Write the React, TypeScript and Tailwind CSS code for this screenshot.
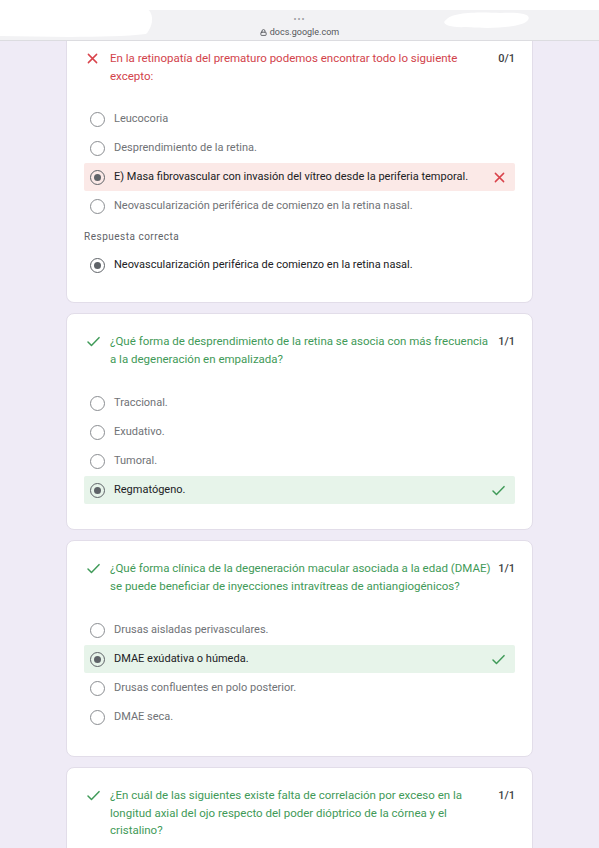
import { Lock } from 'lucide-react'

type Opt = { text: string; state?: 'wrong' | 'right' | 'selected' }

type Question = {
  title: string
  score: string
  ok: boolean
  options?: Opt[]
  correct?: string
}

const QUESTIONS: Question[] = [
  {
    title: 'En la retinopatía del prematuro podemos encontrar todo lo siguiente excepto:',
    score: '0/1',
    ok: false,
    options: [
      { text: 'Leucocoria' },
      { text: 'Desprendimiento de la retina.' },
      { text: 'E) Masa fibrovascular con invasión del vítreo desde la periferia temporal.', state: 'wrong' },
      { text: 'Neovascularización periférica de comienzo en la retina nasal.' },
    ],
    correct: 'Neovascularización periférica de comienzo en la retina nasal.',
  },
  {
    title: '¿Qué forma de desprendimiento de la retina se asocia con más frecuencia a la degeneración en empalizada?',
    score: '1/1',
    ok: true,
    options: [
      { text: 'Traccional.' },
      { text: 'Exudativo.' },
      { text: 'Tumoral.' },
      { text: 'Regmatógeno.', state: 'right' },
    ],
  },
  {
    title: '¿Qué forma clínica de la degeneración macular asociada a la edad (DMAE) se puede beneficiar de inyecciones intravítreas de antiangiogénicos?',
    score: '1/1',
    ok: true,
    options: [
      { text: 'Drusas aisladas perivasculares.' },
      { text: 'DMAE exúdativa o húmeda.', state: 'right' },
      { text: 'Drusas confluentes en polo posterior.' },
      { text: 'DMAE seca.' },
    ],
  },
  {
    title: '¿En cuál de las siguientes existe falta de correlación por  exceso en la longitud axial del ojo respecto del poder dióptrico de la córnea y el cristalino?',
    score: '1/1',
    ok: true,
  },
]

function XMark({ className }: { className?: string }) {
  return (
    <svg viewBox="0 0 12 12" className={className} fill="none" stroke="currentColor" strokeWidth="1.6" strokeLinecap="round">
      <path d="M1.5 1.5l9 9M10.5 1.5l-9 9" />
    </svg>
  )
}

function Check({ className }: { className?: string }) {
  return (
    <svg viewBox="0 0 14 12" className={className} fill="none" stroke="currentColor" strokeWidth="1.6" strokeLinecap="round" strokeLinejoin="round">
      <path d="M1 6.5l3.8 3.8L13 1.8" />
    </svg>
  )
}

function Radio({ on }: { on?: boolean }) {
  return (
    <span
      className={
        'flex h-[15px] w-[15px] shrink-0 items-center justify-center rounded-full border-[1.5px] ' +
        (on ? 'border-[#5f6368]' : 'border-[#8a8d91]')
      }
    >
      {on && <span className="h-[7px] w-[7px] rounded-full bg-[#5f6368]" />}
    </span>
  )
}

function OptionRow({ opt }: { opt: Opt }) {
  const selected = opt.state === 'wrong' || opt.state === 'right' || opt.state === 'selected'
  return (
    <div
      className={
        'flex h-[28px] items-center gap-[9px] rounded-[2px] pl-[6px] pr-[10px] ' +
        (opt.state === 'wrong' ? 'bg-[#fbe9e7]' : opt.state === 'right' ? 'bg-[#e7f4ea]' : '')
      }
    >
      <Radio on={selected} />
      <span className={'flex-1 text-[11px] ' + (selected ? 'text-[#202124]' : 'text-[#6f7276]')}>{opt.text}</span>
      {opt.state === 'wrong' && <XMark className="h-[11px] w-[11px] text-[#d9434b]" />}
      {opt.state === 'right' && <Check className="h-[11px] w-[13px] text-[#3f9a58]" />}
    </div>
  )
}

function QuestionCard({ q, first }: { q: Question; first?: boolean }) {
  return (
    <div
      className={
        'w-[467px] border border-[#e2dde9] bg-white px-[17px] ' +
        (first ? 'rounded-b-[8px] border-t-0 pt-[9px] pb-[23px]' : 'rounded-[8px] pt-[19px] pb-[25px]')
      }
    >
      <div className="flex items-start">
        <span className="flex h-[17px] w-[26px] shrink-0 items-center pl-[3px]">
          {q.ok ? <Check className="h-[11px] w-[13px] text-[#3f9a58]" /> : <XMark className="h-[11px] w-[11px] text-[#d9434b]" />}
        </span>
        <p className={'flex-1 text-[11.5px] leading-[17.5px] ' + (q.ok ? 'text-[#3f9a58]' : 'text-[#d2434b]')}>
          {q.title}
        </p>
        <span className="w-[20px] shrink-0 text-right text-[11px] leading-[17px] font-medium text-[#3c4043]">{q.score}</span>
      </div>

      {q.options && (
        <div className={(first ? 'mt-[20px]' : 'mt-[21px]') + ' flex flex-col gap-[1px]'}>
          {q.options.map((o) => (
            <OptionRow key={o.text} opt={o} />
          ))}
        </div>
      )}

      {q.correct && (
        <>
          <p className="mt-[10px] text-[10px] leading-[14px] tracking-[0.5px] text-[#5f6368]">Respuesta correcta</p>
          <div className="mt-[7px]">
            <OptionRow opt={{ text: q.correct, state: 'selected' }} />
          </div>
        </>
      )}
    </div>
  )
}

function TopBar() {
  return (
    <div className="relative h-[41px] bg-white">
      <div className="absolute inset-x-0 top-[10px] bottom-0 flex flex-col items-center border-b border-[#dcdce0] bg-[#f2f2f4] pt-[4px]">
        <span className="text-[9px] leading-[10px] tracking-[1px] text-[#9a9a9e]">•••</span>
        <span className="mt-[2px] flex items-center gap-[3px] text-[9px] leading-[12px] text-[#55575b]">
          <Lock className="h-[7px] w-[7px]" strokeWidth={3} />
          docs.google.com
        </span>
      </div>
      {/* borrones blancos sobre la barra */}
      <svg className="absolute left-0 top-0" width="599" height="41" viewBox="0 0 599 41">
        <path d="M0 10 C40 4 100 3 140 6 C156 8 154 26 146 34 C110 38 50 37 0 36 Z" fill="#ffffff" />
        <path d="M446 20 C452 12 480 12 500 13 C520 12 532 14 528 20 C522 28 490 29 466 27 C450 28 440 24 446 20 Z" fill="#ffffff" />
      </svg>
    </div>
  )
}

export default function App() {
  return (
    <div className="h-[848px] w-[599px] overflow-hidden bg-[#efebf6] font-['Roboto','Liberation_Sans',sans-serif]">
      <TopBar />
      <div className="flex flex-col items-center gap-[10px]">
        {QUESTIONS.map((q, i) => (
          <QuestionCard key={q.title} q={q} first={i === 0} />
        ))}
      </div>
    </div>
  )
}
